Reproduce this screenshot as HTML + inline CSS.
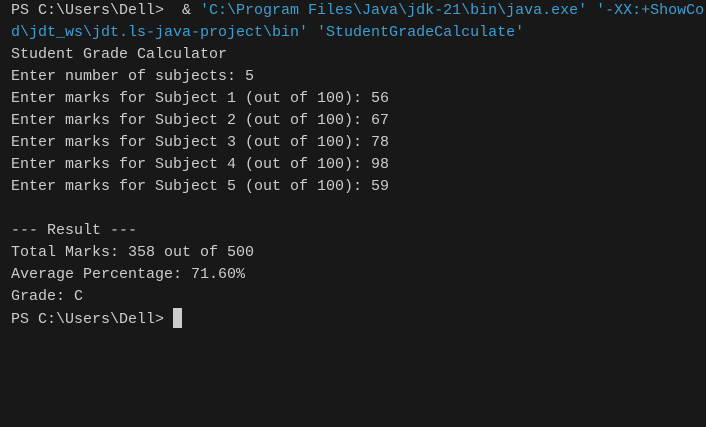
<!DOCTYPE html>
<html><head><style>
html,body{margin:0;padding:0;background:#181818;width:706px;height:427px;overflow:hidden}
pre{margin:0;padding:0 0 0 11px;width:695px;overflow:hidden;font-family:"Liberation Mono",monospace;font-size:15px;line-height:22px;color:#cccccc;white-space:pre}
.c{color:#3a9fd6}
.cur{display:inline-block;width:9px;height:20px;background:#cccccc;vertical-align:-5px}
</style></head><body>
<pre>PS C:\Users\Dell&gt;  &amp; <span class="c">'C:\Program Files\Java\jdk-21\bin\java.exe' '-XX:+ShowCo</span>
<span class="c">d\jdt_ws\jdt.ls-java-project\bin' 'StudentGradeCalculate'</span>
Student Grade Calculator
Enter number of subjects: 5
Enter marks for Subject 1 (out of 100): 56
Enter marks for Subject 2 (out of 100): 67
Enter marks for Subject 3 (out of 100): 78
Enter marks for Subject 4 (out of 100): 98
Enter marks for Subject 5 (out of 100): 59

--- Result ---
Total Marks: 358 out of 500
Average Percentage: 71.60%
Grade: C
PS C:\Users\Dell&gt; <span class="cur"></span></pre>
</body></html>
